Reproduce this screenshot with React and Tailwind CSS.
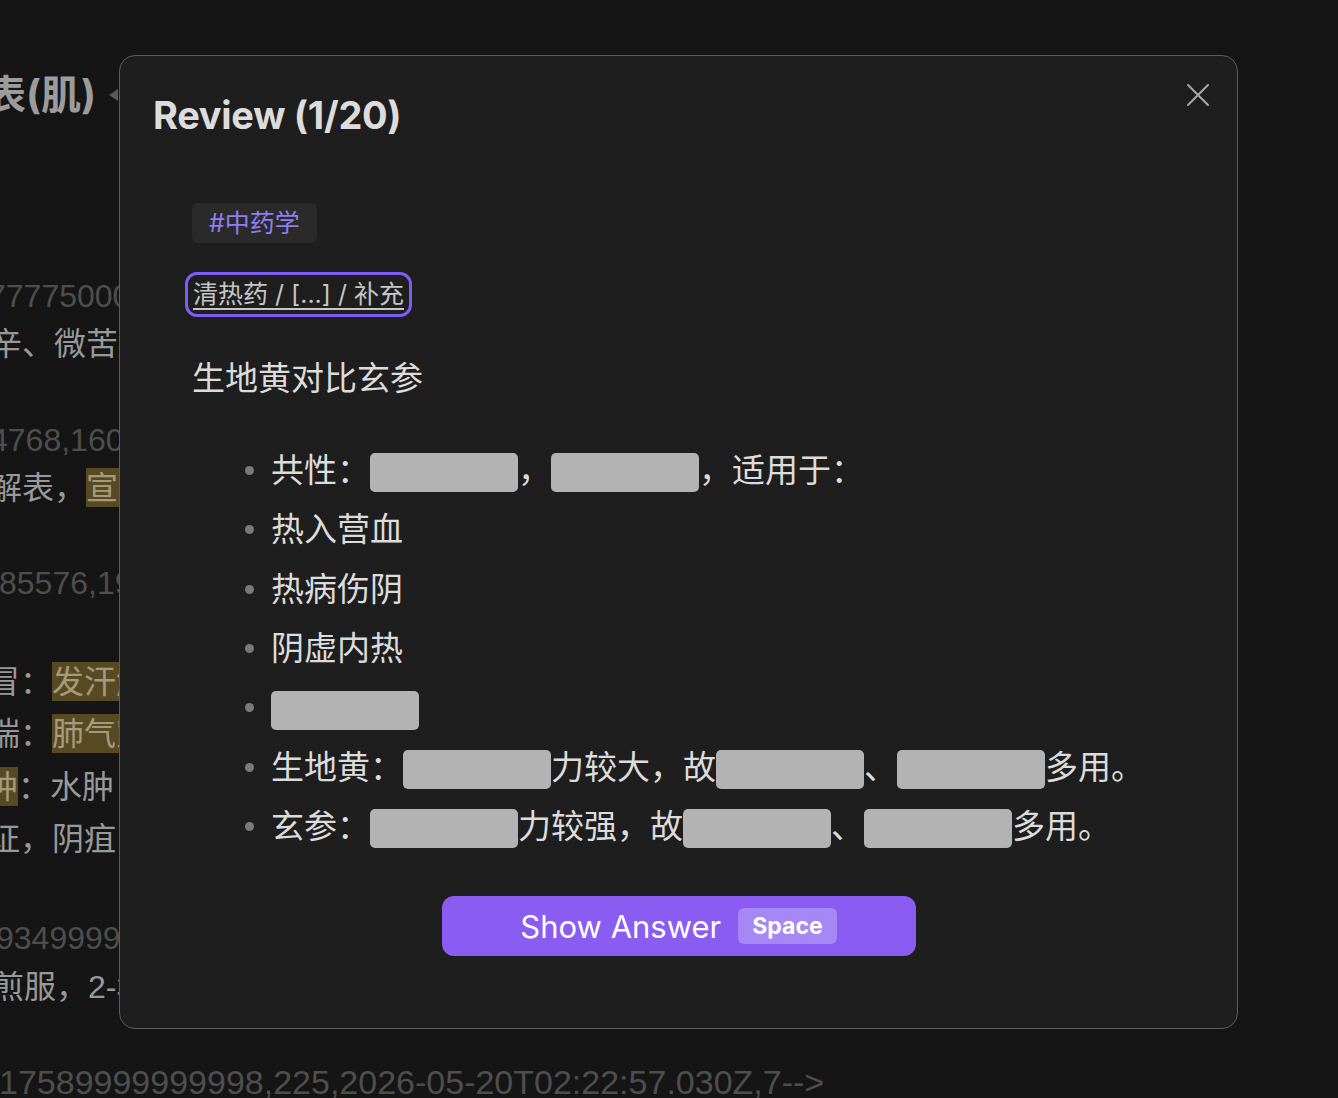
import React from "react";

const Cloze = ({ w = "w-[148px]" }) => (
  <span className={`inline-block ${w} h-[39px] bg-[#b3b3b3] rounded-[5px] align-middle`} />
);

const Mark = ({ children }) => (
  <span className="bg-[#574922] text-[#a69a7e]">{children}</span>
);

const Item = ({ children }) => (
  <li className="flex items-center h-[59.33px]">
    <span className="w-[9px] h-[9px] rounded-full bg-[#7a7a7a] mr-[17px] shrink-0" />
    <span className="whitespace-nowrap">{children}</span>
  </li>
);

const App = () => {
  return (
    <div className="relative w-[1338px] h-[1098px] overflow-hidden bg-[#151515] font-[Inter,'Noto_Sans_CJK_SC',sans-serif]">
      {/* 背景里的笔记内容 */}
      <div className="flex flex-col whitespace-nowrap">
        <div className="h-[60px] mt-[65px] leading-[60px] ml-[-14px] text-[40px] font-bold text-[#9c9c9c] flex items-center">
          <span>表(肌)</span>
          <span className="ml-[13px] w-0 h-0 border-y-[6px] border-y-transparent border-r-[9px] border-r-[#5a5a5a]" />
        </div>
        <div className="h-[48px] mt-[147px] leading-[48px] ml-[-12px] text-[32px] text-[#4e4e4e] font-['Liberation_Sans',sans-serif]">77775000000</div>
        <div className="h-[48px] leading-[48px] ml-[-10px] text-[32px] text-[#999]">辛、微苦</div>
        <div className="h-[48px] mt-[48px] leading-[48px] ml-[-10px] text-[32px] text-[#4e4e4e] font-['Liberation_Sans',sans-serif]">4768,1600000</div>
        <div className="h-[48px] leading-[48px] ml-[-10px] text-[32px] text-[#999]">
          解表，<Mark>宣肺</Mark>
        </div>
        <div className="h-[48px] mt-[47px] leading-[48px] ml-[-1px] text-[32px] text-[#4e4e4e] font-['Liberation_Sans',sans-serif]">85576,1999</div>
        <div className="h-[48px] mt-[51px] leading-[48px] ml-[-12px] text-[32px] text-[#999]">
          冒：<Mark>发汗解表</Mark>
        </div>
        <div className="h-[48px] mt-[4px] leading-[48px] ml-[-12px] text-[32px] text-[#999]">
          喘：<Mark>肺气宣降</Mark>
        </div>
        <div className="h-[48px] mt-[5px] leading-[48px] ml-[-14px] text-[32px] text-[#999]">
          <Mark>肿</Mark>：水肿
        </div>
        <div className="h-[48px] mt-[4px] leading-[48px] ml-[-12px] text-[32px] text-[#999]">证，阴疽</div>
        <div className="h-[48px] mt-[51px] leading-[48px] ml-[-4px] text-[32px] text-[#4e4e4e] font-['Liberation_Sans',sans-serif]">9349999999</div>
        <div className="h-[48px] mt-[1px] leading-[48px] ml-[-8px] text-[32px] text-[#999]">
          煎服，<span className="font-['Liberation_Sans',sans-serif]">2-3</span>
        </div>
        <div className="h-[48px] mt-[47px] leading-[48px] ml-[-1px] text-[34px] text-[#4e4e4e] font-['Liberation_Sans',sans-serif]">
          17589999999998,225,2026-05-20T02:22:57.030Z,7--&gt;
        </div>
      </div>

      {/* 复习弹窗 */}
      <div className="absolute left-[119px] top-[55px] w-[1119px] h-[974px] rounded-[16px] border-[1.5px] border-[#5c5c5c] bg-[#1e1e1e] text-[#dadada]">
        <button className="absolute right-[27px] top-[27px] w-[24px] h-[24px] text-[#a8a8a8]">
          <svg viewBox="0 0 24 24" width="24" height="24" fill="none" stroke="currentColor" strokeWidth="2" strokeLinecap="round">
            <path d="M2 2L22 22M22 2L2 22" />
          </svg>
        </button>

        <h1 className="pt-[36px] pl-[33px] text-[38px] leading-[46px] font-bold text-[#dcdcdc] tracking-[-0.3px]">
          Review (1/20)
        </h1>

        <div className="pl-[72px] pt-[65px] flex flex-col items-start">
          <span className="h-[40px] px-[17px] rounded-[6px] bg-[#2a2a2a] text-[#8f7ef2] text-[25px] leading-[40px]">
            #中药学
          </span>

          <span className="mt-[29px] ml-[-7px] h-[45px] px-[5px] rounded-[12px] border-[3px] border-[#7f5cf2] text-[25px] leading-[39px] text-[#c6c6c6] underline underline-offset-[5px] decoration-[1.5px]">
            清热药 / [...] / 补充
          </span>

          <p className="mt-[38px] text-[33px] leading-[46px] text-[#dcdcdc]">生地黄对比玄参</p>

          <ul className="mt-[40px] pl-[53px] text-[33px] text-[#dcdcdc]">
            <Item>
              共性：<Cloze />，<Cloze />，适用于：
            </Item>
            <Item>热入营血</Item>
            <Item>热病伤阴</Item>
            <Item>阴虚内热</Item>
            <Item>
              <Cloze />
            </Item>
            <Item>
              生地黄：<Cloze />力较大，故<Cloze />、<Cloze />多用。
            </Item>
            <Item>
              玄参：<Cloze />力较强，故<Cloze />、<Cloze />多用。
            </Item>
          </ul>
        </div>

        <div className="flex justify-center mt-[40px]">
          <button className="w-[474px] h-[60px] rounded-[12px] bg-[#8a5cf2] flex items-center justify-center gap-[17px] text-white">
            <span className="text-[31px] leading-none">Show Answer</span>
            <span className="h-[36px] px-[14px] rounded-[6px] bg-[#a587f6] text-[23px] font-bold leading-[36px]">Space</span>
          </button>
        </div>
      </div>
    </div>
  );
};

export default App;
